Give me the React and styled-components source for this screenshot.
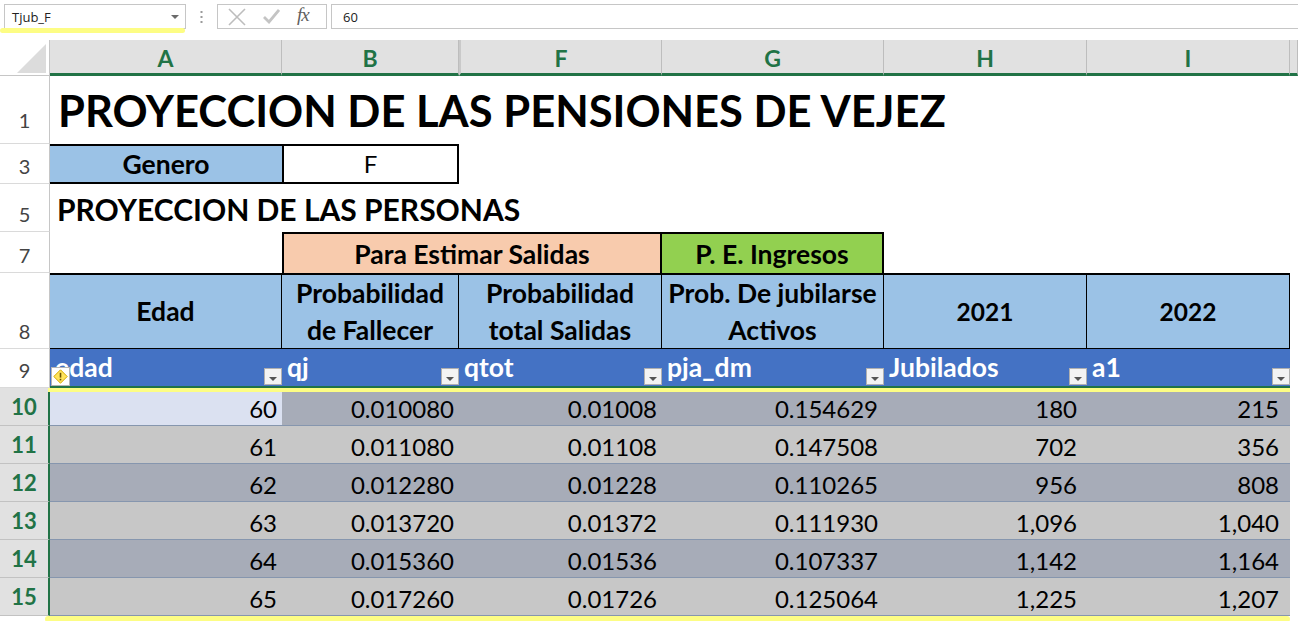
import React from 'react';
import styled, { createGlobalStyle } from 'styled-components';

const GlobalStyle = createGlobalStyle`
  html, body {
    margin: 0;
    padding: 0;
    background: #fff;
  }
  body {
    font-family: Lato, 'Liberation Sans', sans-serif;
  }
`;

const Page = styled.div`
  position: relative;
  width: 1298px;
  height: 621px;
  overflow: hidden;
  background: #fff;
`;

/* ---------- formula bar ---------- */

const FormulaBar = styled.div`
  display: flex;
  align-items: center;
  height: 25px;
  padding: 4px 0 11px 4px;
  font-family: 'Open Sans', 'Noto Sans', sans-serif;
  font-size: 13px;
  color: #222;
`;

const NameBox = styled.div`
  position: relative;
  box-sizing: border-box;
  width: 182px;
  height: 25px;
  border: 1px solid #c6c6c6;
  display: flex;
  align-items: center;
  justify-content: space-between;
  padding: 0 6px 0 7px;

  &::after {
    content: '';
    position: absolute;
    left: -5px;
    right: 0;
    bottom: -5px;
    height: 5px;
    border-radius: 3px;
    background: #fdfd84;
  }
`;

const Caret = styled.span`
  width: 0;
  height: 0;
  border-left: 4px solid transparent;
  border-right: 4px solid transparent;
  border-top: 4px solid #6b6b6b;
`;

const Grip = styled.div`
  width: 31px;
  display: flex;
  justify-content: center;
`;

const FxBox = styled.div`
  box-sizing: border-box;
  width: 110px;
  height: 25px;
  border: 1px solid #c6c6c6;
  display: flex;
  align-items: center;
  padding-left: 10px;
  gap: 17px;
`;

const FxLabel = styled.span`
  font-family: 'Liberation Serif', serif;
  font-style: italic;
  font-size: 19px;
  color: #5f5f5f;
  margin-top: -3px;
  letter-spacing: -1px;
`;

const FormulaInput = styled.div`
  flex: 1;
  box-sizing: border-box;
  height: 25px;
  margin-left: 4px;
  border: 1px solid #c6c6c6;
  border-right: none;
  display: flex;
  align-items: center;
  padding-left: 11px;
`;

/* ---------- sheet grid ---------- */

const Sheet = styled.div`
  position: relative;
  display: grid;
  grid-template-columns: 50px 232px 177px 203px 222px 203px 203px 8px;
  grid-template-rows: 36px 68px 40px 48px 41px 76px 39px repeat(6, 38px);
`;

const Corner = styled.div`
  position: relative;
  box-sizing: border-box;
  background: #fff;
  border-right: 1px solid #c6c6c6;
  border-bottom: 1px solid #c6c6c6;

  &::after {
    content: '';
    position: absolute;
    right: 3px;
    bottom: 2px;
    border-left: 29px solid transparent;
    border-bottom: 29px solid #dcdcdc;
  }
`;

const ColHead = styled.div`
  box-sizing: border-box;
  background: #e1e1e1;
  border-right: 1px solid #bdbdbd;
  border-left: ${({ $hidden }) => ($hidden ? '2px solid #c9c9c9' : 'none')};
  border-bottom: 3px solid #217346;
  display: flex;
  align-items: center;
  justify-content: center;
  padding-top: 2px;
  font-weight: 700;
  font-size: 23px;
  color: #217346;
`;

const RowHead = styled.div`
  box-sizing: border-box;
  display: flex;
  justify-content: center;
  align-items: ${({ $selected }) => ($selected ? 'center' : 'flex-end')};
  padding-bottom: ${({ $selected, $pad }) => ($selected ? 0 : $pad ?? 7)}px;
  background: ${({ $selected }) => ($selected ? '#e1e1e1' : '#fff')};
  border-right: ${({ $selected }) =>
    $selected ? '2px solid #217346' : '1px solid #c6c6c6'};
  border-bottom: 1px solid ${({ $selected }) => ($selected ? '#c2c2c2' : '#dadada')};
  font-size: ${({ $selected }) => ($selected ? 22 : 20)}px;
  line-height: 1;
  font-weight: ${({ $selected }) => ($selected ? 700 : 400)};
  color: ${({ $selected }) => ($selected ? '#217346' : '#444')};
`;

const Blank = styled.div`
  grid-column: span ${({ $span }) => $span || 1};
`;

const Title = styled.div`
  grid-column: span 7;
  display: flex;
  align-items: flex-end;
  padding: 0 0 12px 8px;
  font-size: 43.5px;
  line-height: 1;
  font-weight: 700;
  white-space: nowrap;
  color: #000;
`;

const Subtitle = styled(Title)`
  padding: 0 0 8px 7px;
  font-size: 30px;
`;

const BoxCell = styled.div`
  box-sizing: border-box;
  display: flex;
  align-items: center;
  justify-content: center;
  grid-column: span ${({ $span }) => $span || 1};
  background: ${({ $bg }) => $bg || '#fff'};
  border-top: 2px solid #000;
  border-bottom: 2px solid #000;
  border-right: ${({ $right }) => ($right ? '2px solid #000' : 'none')};
  border-left: ${({ $left }) => ($left ? '2px solid #000' : 'none')};
  font-size: ${({ $bold }) => ($bold ? 26.5 : 24)}px;
  line-height: 1;
  font-weight: ${({ $bold }) => ($bold ? 700 : 400)};
  color: #000;
`;

const GroupCell = styled(BoxCell)`
  border-bottom: none;
  font-weight: 700;
  font-size: 26.5px;
  padding-top: 2px;
`;

const HeadCell = styled.div`
  box-sizing: border-box;
  display: flex;
  align-items: center;
  justify-content: center;
  text-align: center;
  background: #9bc2e6;
  border-top: 2px solid #000;
  border-bottom: 1px solid #000;
  border-right: 1.5px solid #000;
  font-size: ${({ $digits }) => ($digits ? 24.5 : 26.5)}px;
  line-height: 37px;
  font-weight: 700;
  color: #000;
`;

const TableHead = styled.div`
  position: relative;
  box-sizing: border-box;
  display: flex;
  align-items: flex-end;
  padding: 0 0 6px 5px;
  background: #4472c4;
  border-bottom: 2px solid #217346;
  font-size: 26.5px;
  line-height: 1;
  font-weight: 700;
  color: #fff;
`;

const FilterButton = styled.span`
  position: absolute;
  right: 0;
  bottom: 1px;
  box-sizing: border-box;
  width: 18px;
  height: 17px;
  background: #f3f3f3;
  border: 1px solid #b0b0b0;

  &::after {
    content: '';
    position: absolute;
    left: 4px;
    top: 8px;
    border-left: 4px solid transparent;
    border-right: 4px solid transparent;
    border-top: 4px solid #555;
  }
`;

const SmartTag = styled.span`
  position: absolute;
  left: 1px;
  bottom: 0;
  box-sizing: border-box;
  width: 19px;
  height: 19px;
  background: #fff;
  border: 1px solid #b4b4b4;
  display: flex;
  align-items: center;
  justify-content: center;
`;

const shades = {
  active: '#dbe1f1',
  dark: '#a7acb8',
  light: '#c7c7c7',
};

const DataCell = styled.div`
  box-sizing: border-box;
  display: flex;
  align-items: flex-end;
  justify-content: flex-end;
  padding: 0 ${({ $inset }) => $inset || 5}px 4px 0;
  background: ${({ $shade }) => shades[$shade]};
  border-bottom: 1px solid #8696ae;
  font-size: 24px;
  line-height: 1;
  color: #000;
`;

const TableTopMark = styled.div`
  position: absolute;
  left: 48px;
  top: 348px;
  width: 1242px;
  height: 4px;
  background: #fdfd84;
`;

const TableBottomMark = styled.div`
  position: absolute;
  left: 45px;
  top: 576px;
  width: 1245px;
  height: 6px;
  border-radius: 3px;
  background: #fdfd84;
`;

/* ---------- data ---------- */

const columns = ['A', 'B', 'F', 'G', 'H', 'I'];

const headLabels = [
  'Edad',
  ['Probabilidad', 'de Fallecer'],
  ['Probabilidad', 'total Salidas'],
  ['Prob. De jubilarse', 'Activos'],
  '2021',
  '2022',
];

const fields = ['edad', 'qj', 'qtot', 'pja_dm', 'Jubilados', 'a1'];

// right padding per column; H and I use a comma number format
const insets = [5, 5, 5, 6, 10, 11];

const rows = [
  [10, '60', '0.010080', '0.01008', '0.154629', '180', '215'],
  [11, '61', '0.011080', '0.01108', '0.147508', '702', '356'],
  [12, '62', '0.012280', '0.01228', '0.110265', '956', '808'],
  [13, '63', '0.013720', '0.01372', '0.111930', '1,096', '1,040'],
  [14, '64', '0.015360', '0.01536', '0.107337', '1,142', '1,164'],
  [15, '65', '0.017260', '0.01726', '0.125064', '1,225', '1,207'],
];

const CrossIcon = () => (
  <svg width="18" height="18" viewBox="0 0 18 18">
    <path d="M1 1 L17 17 M17 1 L1 17" stroke="#bdbdbd" strokeWidth="1.6" fill="none" />
  </svg>
);

const CheckIcon = () => (
  <svg width="17" height="15" viewBox="0 0 17 15">
    <path d="M1 8 L6 13 L16 1" stroke="#c4c4c4" strokeWidth="2.8" fill="none" />
  </svg>
);

const GripIcon = () => (
  <svg width="3" height="12" viewBox="0 0 3 12">
    <rect x="0.5" y="0" width="2" height="2" fill="#9a9a9a" />
    <rect x="0.5" y="5" width="2" height="2" fill="#9a9a9a" />
    <rect x="0.5" y="10" width="2" height="2" fill="#9a9a9a" />
  </svg>
);

const WarnIcon = () => (
  <svg width="15" height="15" viewBox="0 0 15 15">
    <path d="M7.5 0.8 L14.2 7.5 L7.5 14.2 L0.8 7.5 Z" fill="#ffe45c" stroke="#d4a800" strokeWidth="1" />
    <path d="M7.5 3.8 V8.6" stroke="#6b5300" strokeWidth="1.6" />
    <rect x="6.7" y="9.8" width="1.6" height="1.6" fill="#6b5300" />
  </svg>
);

const App = () => (
  <Page>
    <GlobalStyle />
    <FormulaBar>
      <NameBox>
        Tjub_F
        <Caret />
      </NameBox>
      <Grip>
        <GripIcon />
      </Grip>
      <FxBox>
        <CrossIcon />
        <CheckIcon />
        <FxLabel>fx</FxLabel>
      </FxBox>
      <FormulaInput>60</FormulaInput>
    </FormulaBar>

    <Sheet>
      <Corner />
      {columns.map((c) => (
        <ColHead key={c} $hidden={c === 'F'}>
          {c}
        </ColHead>
      ))}
      <ColHead />

      <RowHead $pad={13}>1</RowHead>
      <Title>PROYECCION DE LAS PENSIONES DE VEJEZ</Title>

      <RowHead>3</RowHead>
      <BoxCell $bg="#9bc2e6" $bold>
        Genero
      </BoxCell>
      <BoxCell $left $right>
        F
      </BoxCell>
      <Blank $span={5} />

      <RowHead>5</RowHead>
      <Subtitle>PROYECCION DE LAS PERSONAS</Subtitle>

      <RowHead>7</RowHead>
      <Blank />
      <GroupCell $span={2} $bg="#f8cbad" $left $right>
        Para Estimar Salidas
      </GroupCell>
      <GroupCell $bg="#92d050" $right>
        P. E. Ingresos
      </GroupCell>
      <Blank $span={3} />

      <RowHead>8</RowHead>
      {headLabels.map((label, i) => (
        <HeadCell key={i} $digits={/^\d+$/.test(label)}>
          {Array.isArray(label) ? (
            <span>
              {label[0]}
              <br />
              {label[1]}
            </span>
          ) : (
            label
          )}
        </HeadCell>
      ))}
      <Blank />

      <RowHead>9</RowHead>
      {fields.map((f, i) => (
        <TableHead key={f}>
          {f}
          {i === 0 && (
            <SmartTag>
              <WarnIcon />
            </SmartTag>
          )}
          <FilterButton />
        </TableHead>
      ))}
      <Blank />

      {rows.map(([num, ...values], r) => (
        <React.Fragment key={num}>
          <RowHead $selected>{num}</RowHead>
          {values.map((v, i) => (
            <DataCell
              key={i}
              $inset={insets[i]}
              $shade={r === 0 && i === 0 ? 'active' : r % 2 === 0 ? 'dark' : 'light'}
            >
              {v}
            </DataCell>
          ))}
          <Blank />
        </React.Fragment>
      ))}

      <TableTopMark />
      <TableBottomMark />
    </Sheet>
  </Page>
);

export default App;
